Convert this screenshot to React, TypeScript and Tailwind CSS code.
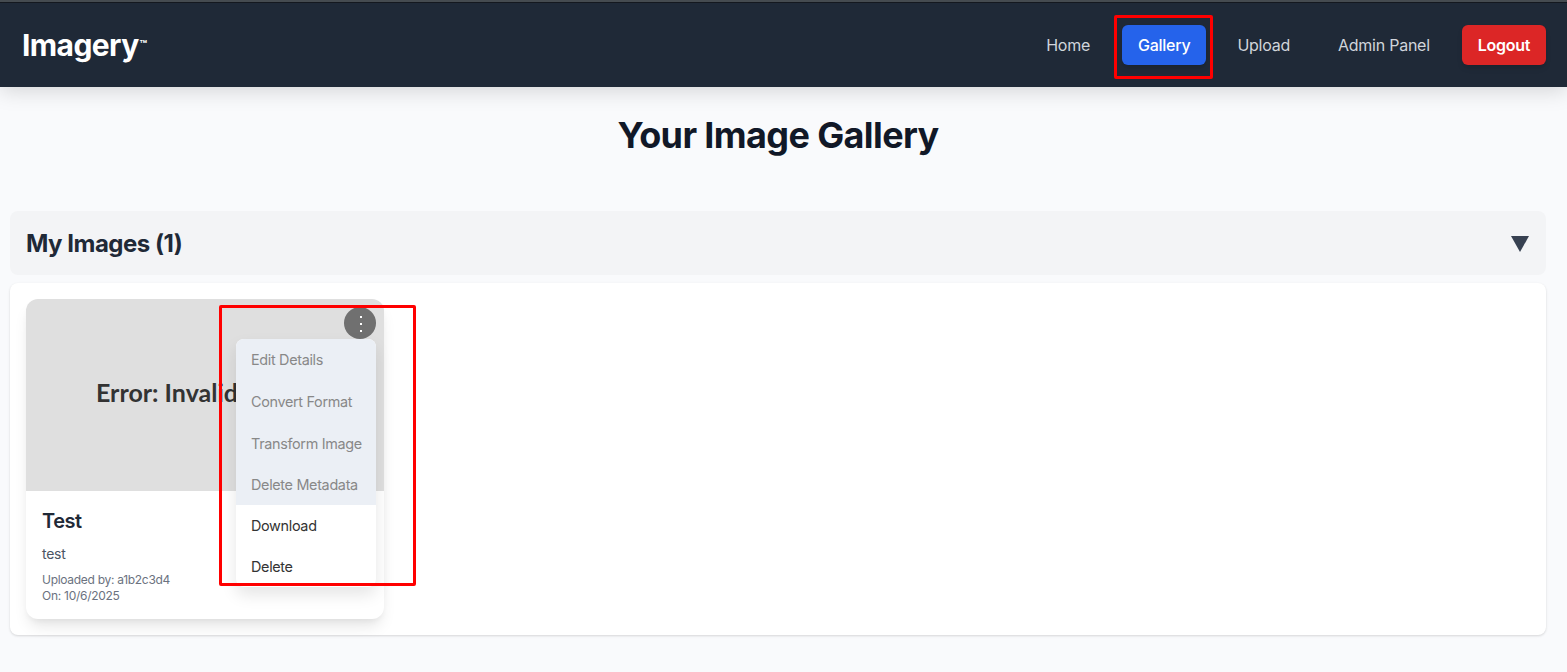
const disabledItems = [
  { label: "Edit Details", height: "h-[42px]" },
  { label: "Convert Format", height: "h-[42px]" },
  { label: "Transform Image", height: "h-[41px]" },
  { label: "Delete Metadata", height: "h-[41px]" },
];

function Header() {
  return (
    <header className="relative flex h-[87px] items-start justify-between border-t-2 border-[#454b50] bg-[#1f2937] pl-[22px] pr-[21px] pt-[23px] shadow-[0_4px_20px_rgba(0,0,0,0.15)]">
      <div className="absolute inset-x-0 top-0 h-px bg-[#14181f]" />
      <div className="flex text-[30px] font-bold leading-10 tracking-[-0.6px] text-white">
        Imagery<span className="ml-px mt-[11px] text-[12px] leading-[18px] tracking-normal">™</span>
      </div>
      <nav className="flex items-center gap-4 text-base leading-6 tracking-[-0.25px] text-[#d1d5db]">
        <a className="px-4 py-2">Home</a>
        <a className="relative rounded-md bg-[#2563eb] px-4 py-2 font-medium text-white shadow-md">
          Gallery
          <span className="absolute -left-2 -top-[10px] h-16 w-[99px] rounded-[2px] border-[3px] border-[#ff0000]" />
        </a>
        <a className="-ml-px px-4 py-2">Upload</a>
        <a className="px-4 py-2">Admin Panel</a>
        <button className="rounded-md bg-[#dc2626] px-4 py-2 font-semibold tracking-[-0.3px] text-white shadow-md">Logout</button>
      </nav>
    </header>
  );
}

function ImageCard() {
  return (
    <article className="relative h-80 w-[358px] rounded-xl bg-white shadow-[0_10px_15px_-3px_rgba(0,0,0,0.1),0_4px_6px_-2px_rgba(0,0,0,0.05)]">
      <div className="flex h-48 items-center rounded-t-xl bg-[#dfdfdf] pl-[70px] pb-1 font-['Lato',sans-serif] text-[25px] font-bold text-[#333]">
        Error: Invalid
      </div>
      <div className="px-4 pt-4">
        <h3 className="text-xl font-semibold leading-7 tracking-[-0.45px] text-[#1f2937]">Test</h3>
        <p className="mt-[9px] text-sm leading-5 tracking-[-0.25px] text-[#4b5563]">test</p>
        <p className="mt-2 text-xs leading-4 tracking-[-0.29px] text-[#6b7280]">Uploaded by: a1b2c3d4</p>
        <p className="text-xs leading-4 tracking-[-0.27px] text-[#6b7280]">On: 10/6/2025</p>
      </div>
      <button className="absolute right-2 top-2 flex h-8 w-8 flex-col items-center justify-center gap-[5px] rounded-full bg-[#707070] pl-px pt-[2px]">
        <span className="h-[2px] w-[2px] bg-white" />
        <span className="h-[2px] w-[2px] bg-white" />
        <span className="h-[2px] w-[2px] bg-white" />
      </button>
      <div className="absolute right-2 top-10 w-[140px] overflow-hidden rounded-lg bg-white text-[14.4px] tracking-[-0.32px] text-[#333] shadow-[0_8px_16px_rgba(0,0,0,0.1)]">
        {disabledItems.map((item) => (
          <div key={item.label} className={`flex items-center bg-[#ebeff5] pl-[15px] text-[#888] ${item.height}`}>
            {item.label}
          </div>
        ))}
        <div className="flex h-[41px] items-center pl-[15px]">Download</div>
        <div className="flex h-[41px] items-center pl-[15px]">Delete</div>
      </div>
      <span className="absolute left-[193px] top-[6px] h-[281px] w-[197px] rounded-[2px] border-[3px] border-[#ff0000]" />
    </article>
  );
}

export default function App() {
  return (
    <div className="h-[672px] overflow-hidden bg-[#f9fafc] font-['Inter',sans-serif] text-[#333]">
      <Header />
      <main className="pl-[10px] pr-[21px] pt-7">
        <h1 className="text-center text-4xl font-bold leading-10 tracking-[-0.62px] text-[#111827]">Your Image Gallery</h1>
        <div className="mt-14 flex h-16 items-center justify-between rounded-lg bg-[#f3f4f6] pl-4 pr-[17px] pt-[2px]">
          <h2 className="text-2xl font-bold leading-8 tracking-[-0.5px] text-[#1f2937]">My Images (1)</h2>
          <svg className="h-4 w-[18px]" viewBox="0 0 18 16">
            <path d="M0 0H18L9 16Z" fill="#374151" />
          </svg>
        </div>
        <section className="mt-2 h-[352px] rounded-lg bg-white p-4 shadow-[0_1px_3px_rgba(0,0,0,0.1),0_1px_2px_rgba(0,0,0,0.05)]">
          <ImageCard />
        </section>
      </main>
    </div>
  );
}
